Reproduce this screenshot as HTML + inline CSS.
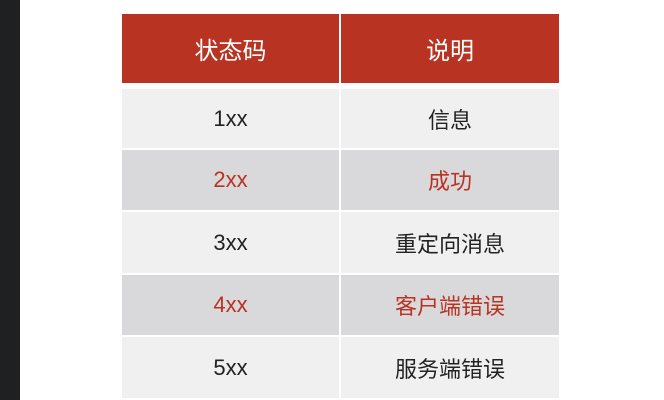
<!DOCTYPE html>
<html><head><style>
body{margin:0;width:664px;height:400px;background:#fff;position:relative;overflow:hidden;font-family:"Liberation Sans","Noto Sans CJK SC",sans-serif}
.strip{position:absolute;left:0;top:0;width:20px;height:400px;background:#1f2022}
.c{position:absolute;display:flex;align-items:center;justify-content:center;font-size:22px;color:#222}
.h{background:#b83322;color:#fff;font-size:24px}
.l{background:#f0f0f1}.d{background:#d9d9db}
.r{color:#b83322}
</style></head><body>
<div class="strip"></div>
<div class="c h" style="left:122px;top:14px;width:217px;height:69px">状态码</div>
<div class="c h" style="left:341px;top:14px;width:218px;height:69px">说明</div>
<div class="c l" style="left:122px;top:89px;width:217px;height:59px">1xx</div>
<div class="c l" style="left:341px;top:89px;width:218px;height:59px">信息</div>
<div class="c d r" style="left:122px;top:150px;width:217px;height:60px">2xx</div>
<div class="c d r" style="left:341px;top:150px;width:218px;height:60px">成功</div>
<div class="c l" style="left:122px;top:212px;width:217px;height:61px">3xx</div>
<div class="c l" style="left:341px;top:212px;width:218px;height:61px">重定向消息</div>
<div class="c d r" style="left:122px;top:275px;width:217px;height:60px">4xx</div>
<div class="c d r" style="left:341px;top:275px;width:218px;height:60px">客户端错误</div>
<div class="c l" style="left:122px;top:337px;width:217px;height:61px">5xx</div>
<div class="c l" style="left:341px;top:337px;width:218px;height:61px">服务端错误</div>
</body></html>
